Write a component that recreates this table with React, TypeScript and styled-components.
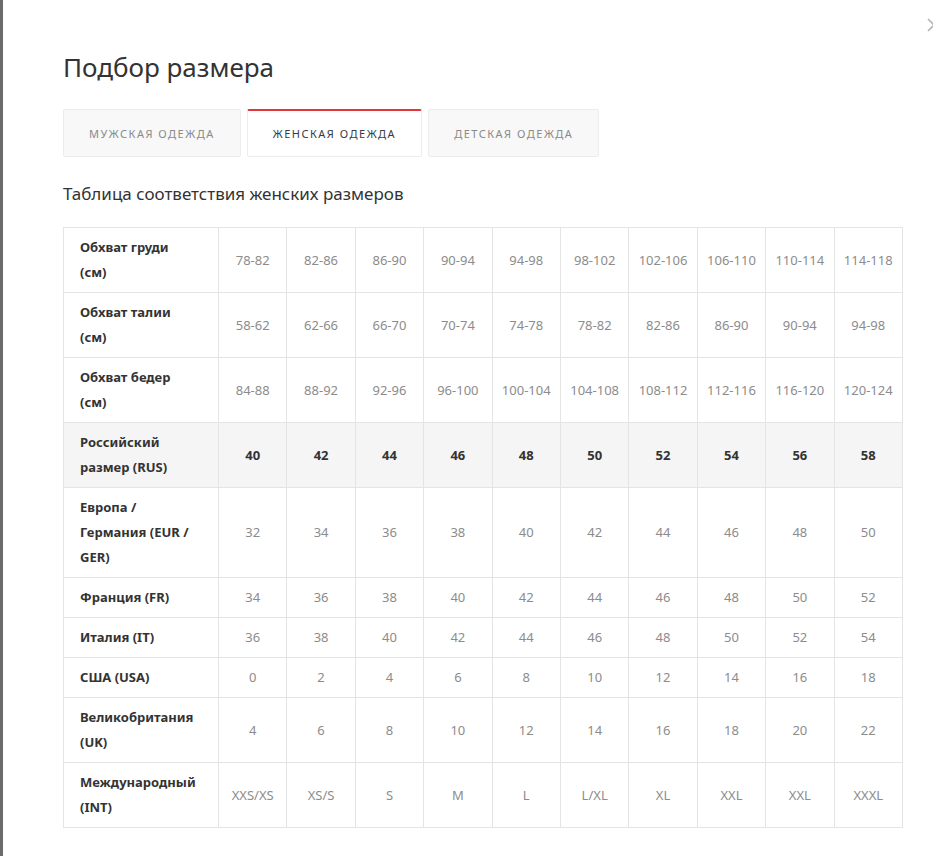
import React, { useState } from 'react';
import styled, { createGlobalStyle } from 'styled-components';

const GlobalStyle = createGlobalStyle`
  html, body {
    margin: 0;
    padding: 0;
    background: #6b6b6b;
    font-family: 'Noto Sans', 'Open Sans', sans-serif;
    overflow: hidden;
  }
`;

const Modal = styled.div`
  position: relative;
  margin-left: 3px;
  min-height: 856px;
  background: #fff;
  padding: 50px 30px 0 60px;
  box-sizing: border-box;
  overflow: hidden;
`;

const Close = styled.button`
  position: absolute;
  top: 17px;
  left: 923px;
  width: 16px;
  height: 16px;
  padding: 0;
  border: 0;
  background: none;
  color: #b5b5b5;
`;

const Title = styled.h2`
  margin: 0 0 25px;
  font-size: 26px;
  line-height: 34px;
  font-weight: 400;
  color: #333;
`;

const Tabs = styled.div`
  display: flex;
  gap: 6px;
  margin-bottom: 26px;
`;

const Tab = styled.button<{ $active?: boolean }>`
  height: 48px;
  padding: 0 25px;
  box-sizing: border-box;
  border: 1px solid #ececec;
  border-top: ${(p) => (p.$active ? '2px solid #e0363d' : '1px solid #ececec')};
  border-radius: 2px;
  background: ${(p) => (p.$active ? '#fff' : '#f8f8f8')};
  color: ${(p) => (p.$active ? '#3a3a44' : '#8a8a8a')};
  font-family: inherit;
  font-size: 11px;
  letter-spacing: 1.5px;
  text-transform: uppercase;
  cursor: pointer;
`;

const Subtitle = styled.div`
  font-size: 17px;
  line-height: 22px;
  color: #333;
  margin-bottom: 22px;
`;

const Table = styled.table`
  width: 840px;
  border-collapse: collapse;
  table-layout: fixed;
`;

const Row = styled.tr<{ $accent?: boolean }>`
  background: ${(p) => (p.$accent ? '#f5f5f5' : '#fff')};
`;

const HeadCell = styled.th`
  width: 155px;
  box-sizing: border-box;
  padding: 7px 10px 7px 16px;
  border: 1px solid #e4e4e4;
  text-align: left;
  font-size: 13px;
  line-height: 25px;
  font-weight: 700;
  color: #333;
`;

const Cell = styled.td<{ $bold?: boolean }>`
  padding: 7px 2px;
  border: 1px solid #e4e4e4;
  text-align: center;
  font-size: 13px;
  line-height: 25px;
  font-weight: ${(p) => (p.$bold ? 700 : 400)};
  color: ${(p) => (p.$bold ? '#333' : '#8c8c8c')};
`;

type SizeRow = { label: string[]; values: string[]; accent?: boolean };

const rows: SizeRow[] = [
  { label: ['Обхват груди', '(см)'], values: ['78-82', '82-86', '86-90', '90-94', '94-98', '98-102', '102-106', '106-110', '110-114', '114-118'] },
  { label: ['Обхват талии', '(см)'], values: ['58-62', '62-66', '66-70', '70-74', '74-78', '78-82', '82-86', '86-90', '90-94', '94-98'] },
  { label: ['Обхват бедер', '(см)'], values: ['84-88', '88-92', '92-96', '96-100', '100-104', '104-108', '108-112', '112-116', '116-120', '120-124'] },
  { label: ['Российский', 'размер (RUS)'], values: ['40', '42', '44', '46', '48', '50', '52', '54', '56', '58'], accent: true },
  { label: ['Европа /', 'Германия (EUR /', 'GER)'], values: ['32', '34', '36', '38', '40', '42', '44', '46', '48', '50'] },
  { label: ['Франция (FR)'], values: ['34', '36', '38', '40', '42', '44', '46', '48', '50', '52'] },
  { label: ['Италия (IT)'], values: ['36', '38', '40', '42', '44', '46', '48', '50', '52', '54'] },
  { label: ['США (USA)'], values: ['0', '2', '4', '6', '8', '10', '12', '14', '16', '18'] },
  { label: ['Великобритания', '(UK)'], values: ['4', '6', '8', '10', '12', '14', '16', '18', '20', '22'] },
  { label: ['Международный', '(INT)'], values: ['XXS/XS', 'XS/S', 'S', 'M', 'L', 'L/XL', 'XL', 'XXL', 'XXL', 'XXXL'] },
];

const tabs = ['Мужская одежда', 'Женская одежда', 'Детская одежда'];

export default function App(): JSX.Element {
  const [active, setActive] = useState(1);

  return (
    <>
      <GlobalStyle />
      <Modal>
        <Close aria-label="Закрыть">
          <svg width="16" height="16" viewBox="0 0 16 16" fill="none" stroke="currentColor" strokeWidth="1.6">
            <path d="M2 2l12 12M14 2L2 14" />
          </svg>
        </Close>
        <Title>Подбор размера</Title>
        <Tabs>
          {tabs.map((t, i) => (
            <Tab key={t} $active={i === active} onClick={() => setActive(i)}>
              {t}
            </Tab>
          ))}
        </Tabs>
        <Subtitle>Таблица соответствия женских размеров</Subtitle>
        <Table>
          <colgroup>
            <col style={{ width: 155 }} />
          </colgroup>
          <tbody>
            {rows.map((r) => (
              <Row key={r.label.join(' ')} $accent={r.accent}>
                <HeadCell>
                  {r.label.map((l, i) => (
                    <React.Fragment key={l}>
                      {i > 0 && <br />}
                      {l}
                    </React.Fragment>
                  ))}
                </HeadCell>
                {r.values.map((v, i) => (
                  <Cell key={i} $bold={r.accent}>
                    {v}
                  </Cell>
                ))}
              </Row>
            ))}
          </tbody>
        </Table>
      </Modal>
    </>
  );
}
